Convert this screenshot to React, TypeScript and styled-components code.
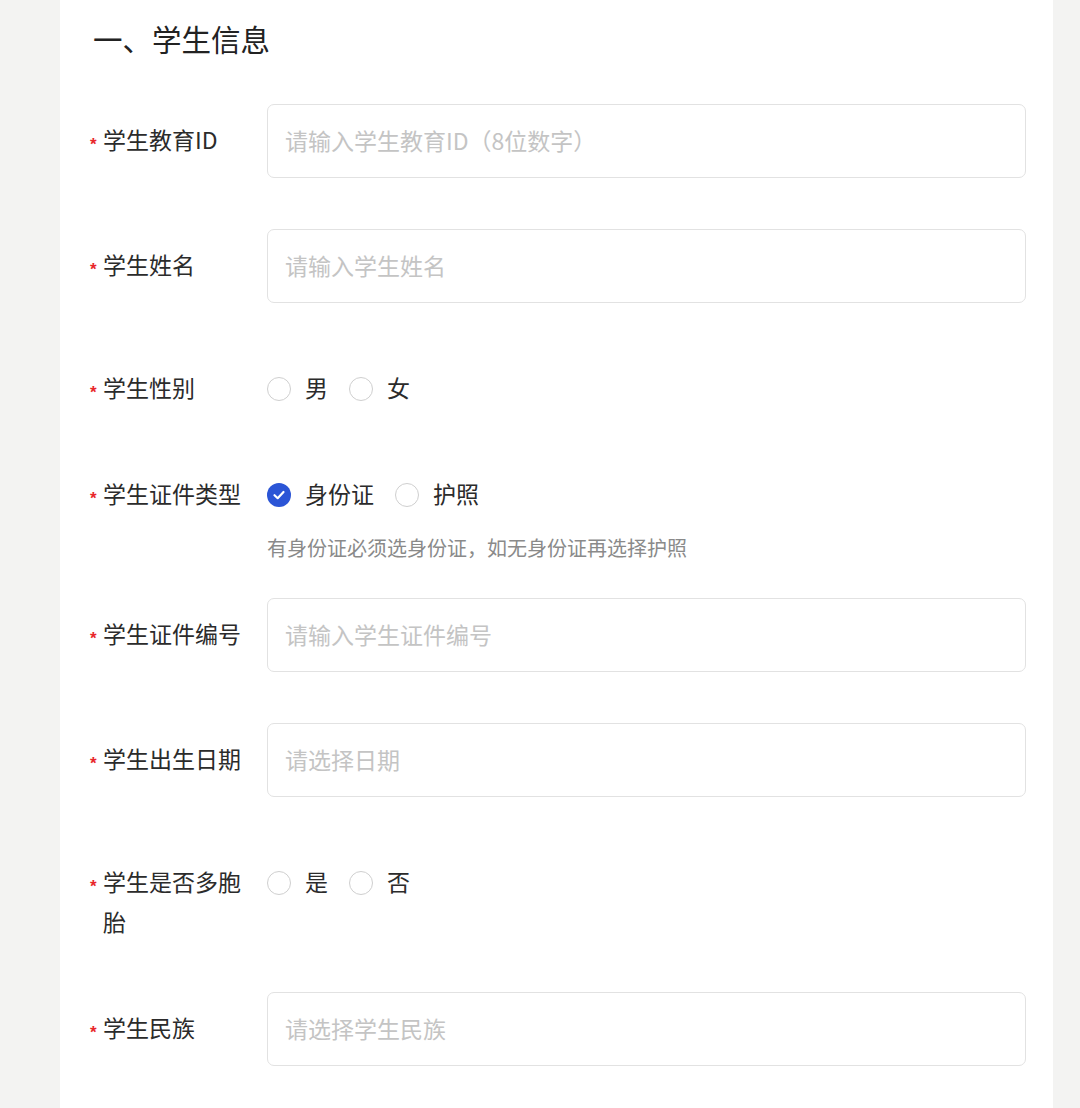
import React from 'react'
import styled, { createGlobalStyle } from 'styled-components'

const GlobalStyle = createGlobalStyle`
  html, body {
    margin: 0;
    padding: 0;
    background: #f3f3f2;
  }
  body {
    font-family: "Noto Sans CJK SC", "Liberation Sans", sans-serif;
    -webkit-font-smoothing: antialiased;
  }
`

const Page = styled.div`
  width: 1080px;
  min-height: 1108px;
  background: #f3f3f2;
  overflow: hidden;
`

const Panel = styled.div`
  margin-left: 60px;
  width: 993px;
  min-height: 1108px;
  background: #fff;
  padding: 20px 27px 0 30px;
  box-sizing: border-box;
`

const Title = styled.h2`
  margin: 0 0 44px 3px;
  font-size: 29.5px;
  line-height: 36px;
  padding-bottom: 4px;
  font-weight: 400;
  color: #222;
`

const Item = styled.div<{ $pad?: number; $min?: number; $mb?: number }>`
  display: grid;
  grid-template-columns: 177px 1fr;
  align-items: ${p => (p.$pad !== undefined ? 'start' : 'center')};
  padding-top: ${p => p.$pad ?? 0}px;
  min-height: ${p => p.$min ?? 0}px;
  margin-bottom: ${p => p.$mb ?? 51}px;
  box-sizing: border-box;
`

const Label = styled.div`
  display: flex;
  align-items: flex-start;
  font-size: 23px;
  color: #2b2b2b;
`

const Star = styled.span`
  flex: none;
  width: 13px;
  height: 40px;
  display: flex;
  align-items: center;
  color: #e8262b;
  font-family: "Liberation Sans", sans-serif;
  font-weight: 700;
  font-size: 17px;
  line-height: 1;
  padding-top: 6px;
  box-sizing: border-box;
`

const LabelText = styled.span`
  width: 142px;
  line-height: 40px;
  margin: -2px 0 2px;
  word-break: break-all;
`

const Input = styled.div`
  height: 74px;
  border: 1.5px solid #e2e2e2;
  border-radius: 7px;
  box-sizing: border-box;
  padding: 0 0 3px 17px;
  display: flex;
  align-items: center;
  font-size: 23px;
  color: #c4c4c4;
`

const Control = styled.div`
  display: flex;
  flex-direction: column;
`

const RadioGroup = styled.div`
  display: flex;
  align-items: center;
  height: 40px;
  gap: 21px;
`

const Radio = styled.label`
  display: flex;
  align-items: center;
  gap: 14px;
  font-size: 23px;
  color: #2b2b2b;
`

const RadioText = styled.span`
  line-height: 36px;
  padding-bottom: 4px;
`

const Circle = styled.span<{ $on?: boolean }>`
  width: 24px;
  height: 24px;
  border-radius: 50%;
  box-sizing: border-box;
  border: ${p => (p.$on ? 'none' : '1.5px solid #cfcfcf')};
  background: ${p => (p.$on ? '#2b55d6' : '#fff')};
  display: flex;
  align-items: center;
  justify-content: center;
`

const Help = styled.div`
  margin-top: 22px;
  font-size: 20px;
  line-height: 22px;
  padding-bottom: 2px;
  color: #8a8a8a;
`

const Check = () => (
  <svg width="14" height="14" viewBox="0 0 14 14">
    <path d="M2.5 7.2 L5.7 10.2 L11.5 4" fill="none" stroke="#fff" strokeWidth="2.2" strokeLinecap="round" strokeLinejoin="round" />
  </svg>
)

const Lbl = ({ text }: { text: string }) => (
  <Label>
    <Star>*</Star>
    <LabelText>{text}</LabelText>
  </Label>
)

const RadioRow = ({ opts, checked }: { opts: string[]; checked?: number }) => (
  <RadioGroup>
    {opts.map((o, i) => (
      <Radio key={o}>
        <Circle $on={checked === i}>{checked === i && <Check />}</Circle>
        <RadioText>{o}</RadioText>
      </Radio>
    ))}
  </RadioGroup>
)

export default function App() {
  return (
    <Page>
      <GlobalStyle />
      <Panel>
        <Title>一、学生信息</Title>

        <Item>
          <Lbl text="学生教育ID" />
          <Input>请输入学生教育ID（8位数字）</Input>
        </Item>

        <Item>
          <Lbl text="学生姓名" />
          <Input>请输入学生姓名</Input>
        </Item>

        <Item $pad={15} $min={70}>
          <Lbl text="学生性别" />
          <RadioRow opts={['男', '女']} />
        </Item>

        <Item $pad={0} $mb={37}>
          <Lbl text="学生证件类型" />
          <Control>
            <RadioRow opts={['身份证', '护照']} checked={0} />
            <Help>有身份证必须选身份证，如无身份证再选择护照</Help>
          </Control>
        </Item>

        <Item>
          <Lbl text="学生证件编号" />
          <Input>请输入学生证件编号</Input>
        </Item>

        <Item>
          <Lbl text="学生出生日期" />
          <Input>请选择日期</Input>
        </Item>

        <Item $pad={15} $min={70} $mb={49}>
          <Lbl text="学生是否多胞胎" />
          <RadioRow opts={['是', '否']} />
        </Item>

        <Item>
          <Lbl text="学生民族" />
          <Input>请选择学生民族</Input>
        </Item>
      </Panel>
    </Page>
  )
}
